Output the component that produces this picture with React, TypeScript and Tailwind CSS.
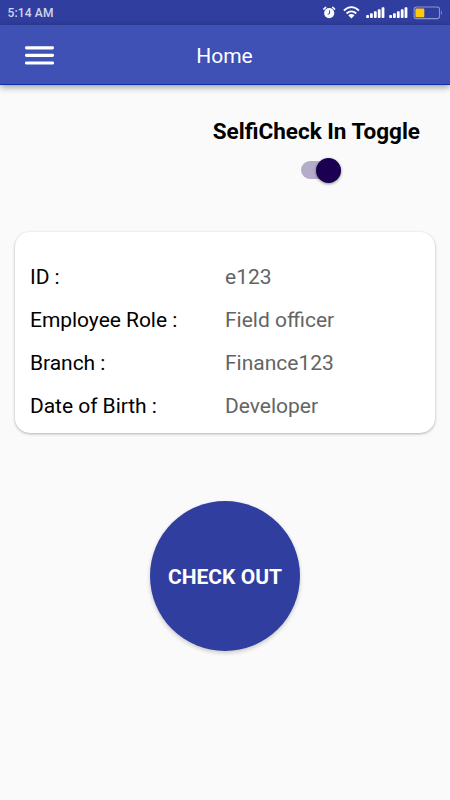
const details = [
  { label: "ID :", value: "e123" },
  { label: "Employee Role :", value: "Field officer" },
  { label: "Branch :", value: "Finance123" },
  { label: "Date of Birth :", value: "Developer" },
];

const AlarmIcon = () => (
  <svg width="14" height="14" viewBox="0 0 14 14" fill="none">
    <circle cx="6.2" cy="7.1" r="5.1" fill="#fff" />
    <path d="M.8 3.1 2.7 1.4M11.6 3.1 9.7 1.4" stroke="#fff" strokeWidth="1.5" strokeLinecap="round" />
    <path d="M6.6 4.3v3.3L4.7 8.3" stroke="#303f9f" strokeWidth="1" />
  </svg>
);

const WifiIcon = () => (
  <svg width="18" height="14" viewBox="0 0 18 14" fill="none" stroke="#fff" strokeWidth="1.9">
    <path d="M.9 4.6C5.2-.1 11.6-.1 15.9 4.6" />
    <path d="M3.6 7.5c2.8-2.9 6.8-2.9 9.6 0" />
    <path d="M8.4 12.4 5.3 9.3c1.8-1.7 4.4-1.7 6.2 0Z" fill="#fff" stroke="none" />
  </svg>
);

const SignalIcon = () => (
  <svg width="19" height="12" viewBox="0 0 19 12" fill="#fff">
    <rect x="0.2" y="8" width="2.8" height="3" rx="0.8" />
    <rect x="4" y="6.2" width="2.8" height="4.8" rx="0.8" />
    <rect x="7.9" y="4.2" width="2.8" height="6.8" rx="0.8" />
    <rect x="11.8" y="2.3" width="2.8" height="8.7" rx="0.8" />
    <rect x="15.6" y="0.2" width="2.8" height="10.8" rx="0.8" />
  </svg>
);

const BatteryIcon = () => (
  <svg width="30" height="14" viewBox="0 0 30 14" fill="none">
    <rect x="1.1" y="1" width="25.4" height="11.6" rx="2.4" stroke="#8c94ca" strokeWidth="1.1" />
    <rect x="2.4" y="2.4" width="8.9" height="8.8" rx="1" fill="#ffc90b" />
    <path d="M28 4.8c1.2.5 1.2 3.5 0 4Z" fill="#8c94ca" />
  </svg>
);

const StatusBar = () => (
  <div className="flex h-[25px] items-center bg-[#303f9f] pl-[7.5px] pr-[7px]">
    <span className="flex-1 pt-px text-[12px] font-medium leading-none tracking-[0.15px] text-[#d3d7ee]">5:14 AM</span>
    <div className="flex items-center">
      <AlarmIcon />
      <div className="ml-[6px]"><WifiIcon /></div>
      <div className="ml-[5px] pt-px"><SignalIcon /></div>
      <div className="ml-[4px] pt-px"><SignalIcon /></div>
      <div className="ml-[5px]"><BatteryIcon /></div>
    </div>
  </div>
);

const Header = () => (
  <header className="grid h-[60px] grid-cols-[1fr_auto_1fr] items-center border-b border-[#0c2db4] bg-[#3f51b5] shadow-[0_2px_7px_rgba(0,0,0,0.4)]">
    <button aria-label="Menu" className="ml-[25px] w-[29px]">
      <svg width="29" height="20" viewBox="0 0 29 20" fill="#fff" className="block">
        <rect y="1.2" width="29" height="3.2" rx="1.4" />
        <rect y="8.8" width="29" height="3.2" rx="1.4" />
        <rect y="16.4" width="29" height="3.2" rx="1.4" />
      </svg>
    </button>
    <h1 className="pr-px pt-0.5 text-[21px] leading-6 text-white">Home</h1>
  </header>
);

export default function App() {
  return (
    <div className="flex h-[800px] w-[450px] flex-col overflow-hidden bg-[#fafafa] font-['Roboto',sans-serif]">
      <StatusBar />
      <Header />
      <main className="flex flex-col items-center">
        <div className="mr-[30px] mt-[34px] flex flex-col items-center self-end">
          <h2 className="text-[22.5px] font-bold leading-6 text-black">SelfiCheck In Toggle</h2>
          <button
            role="switch"
            aria-checked="true"
            aria-label="SelfiCheck In Toggle"
            className="mr-[-9px] mt-[18px] flex h-[18px] w-[40px] items-center justify-end rounded-full bg-[#b5acca]"
          >
            <span className="size-[25px] shrink-0 rounded-full bg-[#1b0052] shadow-[0_1px_3px_rgba(0,0,0,0.45)]" />
          </button>
        </div>

        <section className="mt-[53px] h-[201px] w-[420px] rounded-[15px] bg-white px-[15px] pt-[24px] shadow-[0_1px_3px_rgba(0,0,0,0.3)]">
          {details.map((item) => (
            <div key={item.label} className="flex h-[43px] items-center text-[21px]">
              <span className="w-[195px] tracking-[-0.04px] text-black">{item.label}</span>
              <span className="text-[#646464]">{item.value}</span>
            </div>
          ))}
        </section>

        <button className="mt-[68px] size-[150px] rounded-full bg-[#303f9f] pt-[3px] text-[21px] font-bold text-white shadow-[0_2px_4px_rgba(0,0,0,0.2)]">
          CHECK OUT
        </button>
      </main>
    </div>
  );
}
